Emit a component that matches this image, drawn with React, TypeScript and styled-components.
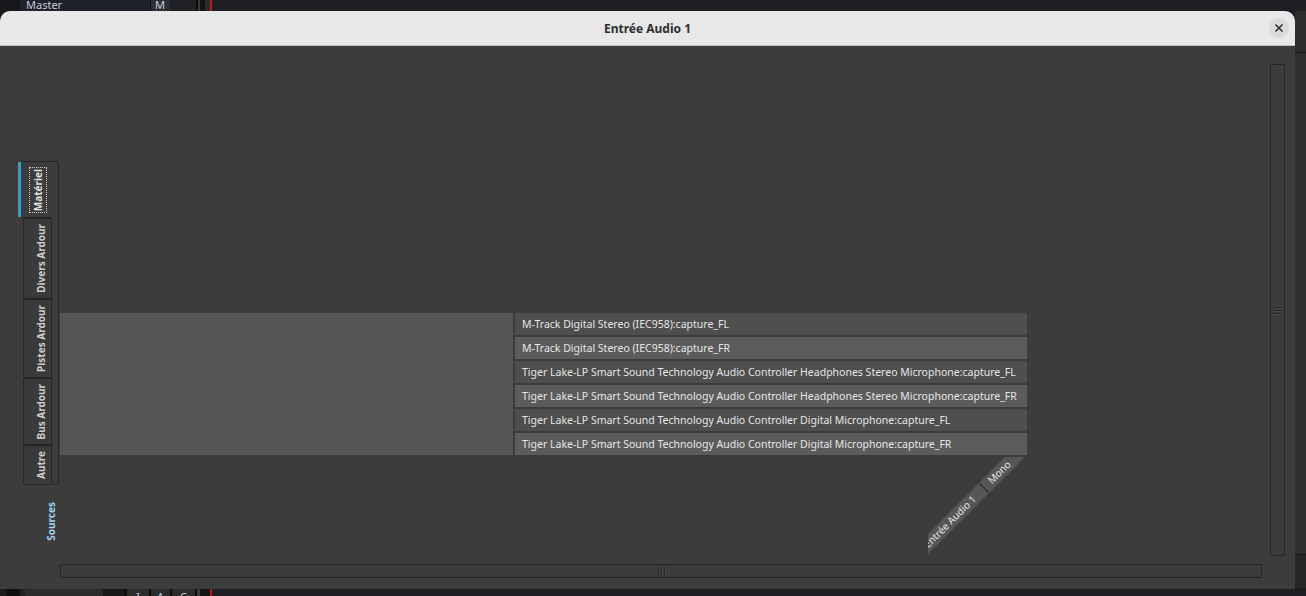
import React from "react";
import styled, { createGlobalStyle, css } from "styled-components";

const GlobalStyle = createGlobalStyle`
  html, body { margin: 0; padding: 0; width: 1306px; height: 596px; overflow: hidden; background: #1c1d22; }
  #root { width: 1306px; height: 596px; }
  * { box-sizing: border-box; }
`;

const Screen = styled.div`
  width: 1306px;
  height: 596px;
  display: flex;
  flex-direction: column;
  font-family: "Noto Sans", "DejaVu Sans", sans-serif;
  background: #1c1d22;
  overflow: hidden;
`;

/* ---------- host application peeking around the dialog ---------- */
const HostBar = styled.div<{ $h: number; $pad: number }>`
  height: ${(p) => p.$h}px;
  flex-shrink: 0;
  display: flex;
  overflow: hidden;
  background: #1e1f24;
  font-size: 11px;
  line-height: ${(p) => p.$h + p.$pad}px;
`;

const HostCell = styled.div<{ $w?: number; $bg: string; $align?: "left" | "center" }>`
  ${(p) => (p.$w ? `width: ${p.$w}px; flex-shrink: 0;` : "flex: 1;")}
  background: ${(p) => p.$bg};
  color: #c3cddd;
  padding-left: ${(p) => (p.$align === "left" ? 6 : 0)}px;
  text-align: ${(p) => p.$align ?? "center"};
  white-space: nowrap;
  overflow: hidden;
`;

const Middle = styled.div`
  display: flex;
  height: 578px;
  flex-shrink: 0;
`;

const HostSide = styled.div`
  flex: 1;
  display: flex;
  flex-direction: column;
  background: #2c2c2c;
`;

const HostSideBlock = styled.div<{ $h?: number; $bg: string }>`
  ${(p) => (p.$h ? `height: ${p.$h}px;` : "flex: 1;")}
  background: ${(p) => p.$bg};
  border-bottom: 1px solid #1a1a1a;
`;

/* ---------- dialog ---------- */
const Dialog = styled.div`
  width: 1295px;
  height: 578px;
  display: flex;
  flex-direction: column;
  border-radius: 10px 10px 0 0;
  overflow: hidden;
  background: #3c3c3c;
`;

const TitleBar = styled.div`
  height: 35px;
  flex-shrink: 0;
  background: #e8e8e8;
  border-bottom: 1px solid #c2c2c2;
  display: grid;
  grid-template-columns: 1fr auto 1fr;
  align-items: center;
`;

const Title = styled.div`
  grid-column: 2;
  font-weight: 700;
  font-size: 12px;
  color: #2e2e2e;
`;

const CloseButton = styled.button`
  grid-column: 3;
  justify-self: end;
  margin-right: 6px;
  width: 20px;
  height: 20px;
  border-radius: 50%;
  border: none;
  padding: 0;
  background: #dadada;
  display: grid;
  place-items: center;
`;

const Body = styled.div`
  flex: 1;
  display: grid;
  grid-template-columns: 42px 1202px 8px 15px;
  grid-template-rows: 492px 8px 14px;
  padding: 18px 0 0 18px;
`;

/* ---------- left notebook ---------- */
const TabsColumn = styled.div`
  grid-column: 1;
  grid-row: 1;
  display: flex;
  flex-direction: column;
  padding-top: 97px;
`;

const Notebook = styled.div`
  display: flex;
`;

const TabList = styled.div`
  width: 33px;
  display: flex;
  flex-direction: column;
  align-items: flex-end;
`;

const Tab = styled.div<{ $active?: boolean }>`
  position: relative;
  width: 28px;
  padding: 5px 4px 5px 0;
  display: flex;
  justify-content: flex-end;
  background: #3a3a3a;
  border: 1px solid #262626;
  border-right: none;
  border-radius: 3px 0 0 3px;
  color: #cdcdcd;
  font-weight: 700;
  font-size: 10px;
  line-height: 12px;
  ${(p) =>
    p.$active &&
    css`
      width: 34px;
      margin-right: -1px;
      z-index: 1;
      padding: 5px 5px 4px 0;
      background: #3c3c3c;
      border-left: 3px solid #3f9bc4;
      color: #e2e2e2;
    `}
`;

const TabLabel = styled.span`
  writing-mode: vertical-rl;
  transform: rotate(180deg);
  white-space: nowrap;
`;

const FocusBox = styled.span`
  display: flex;
  padding: 1px 2px;
  border: 1px dotted #d0d0d0;
`;

const Page = styled.div`
  width: 8px;
  background: #3c3c3c;
  border: 1px solid #262626;
  border-radius: 0 3px 3px 3px;
`;

const SideCaption = styled.span`
  align-self: flex-end;
  margin: 17px 3px 0 0;
  writing-mode: vertical-rl;
  transform: rotate(180deg);
  color: #a3d2ef;
  font-weight: 700;
  font-size: 10px;
  line-height: 12px;
`;

/* ---------- port matrix ---------- */
const Viewport = styled.div`
  grid-column: 2;
  grid-row: 1;
  overflow: hidden;
  display: flex;
  flex-direction: column;
  padding-top: 249px;
`;

const MatrixRow = styled.div`
  display: flex;
  gap: 2px;
`;

const GridArea = styled.div`
  width: 453px;
  background: #555555;
`;

const PortList = styled.div`
  width: 512px;
  display: flex;
  flex-direction: column;
  gap: 2px;
`;

const PortRow = styled.div<{ $alt: boolean }>`
  height: 22px;
  display: flex;
  align-items: center;
  padding: 0 0 1px 7px;
  background: ${(p) => (p.$alt ? "#5c5c5c" : "#4e4e4e")};
  color: #e6e6e6;
  font-size: 10.5px;
  white-space: nowrap;
  overflow: hidden;
`;

const ColumnLabels = styled.svg`
  display: block;
  margin: 2px 0 0 868px;
  flex-shrink: 0;
  font-family: "Noto Sans", "DejaVu Sans", sans-serif;
`;

/* ---------- scrollbars ---------- */
const Trough = styled.div<{ $vertical?: boolean }>`
  grid-column: ${(p) => (p.$vertical ? 4 : 2)};
  grid-row: ${(p) => (p.$vertical ? 1 : 3)};
  background: #3c3c3c;
  border: 1px solid #262626;
  border-radius: 2px;
  display: grid;
  place-items: center;
`;

const Grip = styled.div<{ $vertical?: boolean }>`
  ${(p) =>
    p.$vertical
      ? css`
          width: 8px;
          height: 1px;
          box-shadow: 0 1px 0 #4a4a4a, 0 3px 0 #242424, 0 4px 0 #4a4a4a, 0 6px 0 #242424, 0 7px 0 #4a4a4a;
          transform: translateY(-3px);
        `
      : css`
          width: 1px;
          height: 8px;
          box-shadow: 1px 0 0 #4a4a4a, 3px 0 0 #242424, 4px 0 0 #4a4a4a, 6px 0 0 #242424, 7px 0 0 #4a4a4a;
          transform: translateX(-3px);
        `}
  background: #242424;
`;

const ports = [
  "M-Track Digital Stereo (IEC958):capture_FL",
  "M-Track Digital Stereo (IEC958):capture_FR",
  "Tiger Lake-LP Smart Sound Technology Audio Controller Headphones Stereo Microphone:capture_FL",
  "Tiger Lake-LP Smart Sound Technology Audio Controller Headphones Stereo Microphone:capture_FR",
  "Tiger Lake-LP Smart Sound Technology Audio Controller Digital Microphone:capture_FL",
  "Tiger Lake-LP Smart Sound Technology Audio Controller Digital Microphone:capture_FR",
];

const tabs = ["Divers Ardour", "Pistes Ardour", "Bus Ardour", "Autre"];

export default function App() {
  return (
    <>
      <GlobalStyle />
      <Screen>
        <HostBar $h={11} $pad={-2}>
          <HostCell $w={20} $bg="#17181b" />
          <HostCell $w={130} $bg="#1f2129" $align="left">Master</HostCell>
          <HostCell $w={1} $bg="#0e0e10" />
          <HostCell $w={18} $bg="#2d2f36">M</HostCell>
          <HostCell $w={27} $bg="#1f2126" />
          <HostCell $w={2} $bg="#0c0c0c" />
          <HostCell $w={2} $bg="#3a3a3a" />
          <HostCell $w={5} $bg="#131313" />
          <HostCell $w={5} $bg="#2a2a2a" />
          <HostCell $w={2} $bg="#c01818" />
          <HostCell $bg="#1e1f24" />
        </HostBar>
        <Middle>
          <Dialog>
            <TitleBar>
              <Title>Entrée Audio 1</Title>
              <CloseButton aria-label="Fermer">
                <svg width="10" height="10" viewBox="0 0 10 10">
                  <path d="M1.5 1.5 L8.5 8.5 M8.5 1.5 L1.5 8.5" stroke="#2e2e2e" strokeWidth="1.6" />
                </svg>
              </CloseButton>
            </TitleBar>
            <Body>
              <TabsColumn>
                <Notebook>
                  <TabList>
                    <Tab $active>
                      <FocusBox>
                        <TabLabel>Matériel</TabLabel>
                      </FocusBox>
                    </Tab>
                    {tabs.map((t) => (
                      <Tab key={t}>
                        <TabLabel>{t}</TabLabel>
                      </Tab>
                    ))}
                  </TabList>
                  <Page />
                </Notebook>
                <SideCaption>Sources</SideCaption>
              </TabsColumn>

              <Viewport>
                <MatrixRow>
                  <GridArea />
                  <PortList>
                    {ports.map((p, i) => (
                      <PortRow key={p} $alt={i % 2 === 1}>
                        {p}
                      </PortRow>
                    ))}
                  </PortList>
                </MatrixRow>
                <ColumnLabels width="99" height="99" viewBox="0 0 99 99">
                  <polygon points="77,0 97,0 -2,99 -22,99" fill="#565656" />
                  <line x1="51" y1="26" x2="61" y2="36" stroke="#3a3a3a" strokeWidth="2" />
                  <text
                    x="71"
                    y="15"
                    transform="rotate(-45 71 15)"
                    textAnchor="middle"
                    dominantBaseline="central"
                    fontSize="10"
                    fill="#e8e8e8"
                  >
                    Mono
                  </text>
                  <text
                    x="46"
                    y="40"
                    transform="rotate(-45 46 40)"
                    textAnchor="end"
                    dominantBaseline="central"
                    fontSize="10"
                    fill="#e8e8e8"
                  >
                    Entrée Audio 1
                  </text>
                </ColumnLabels>
              </Viewport>

              <Trough $vertical>
                <Grip $vertical />
              </Trough>
              <Trough>
                <Grip />
              </Trough>
            </Body>
          </Dialog>
          <HostSide>
            <HostSideBlock $h={42} $bg="#2d2d2d" />
            <HostSideBlock $h={502} $bg="#303030" />
            <HostSideBlock $bg="#262626" />
          </HostSide>
        </Middle>
        <HostBar $h={7} $pad={8}>
          <HostCell $w={7} $bg="#1d1d1d" />
          <HostCell $w={13} $bg="#0f0f0f" />
          <HostCell $w={5} $bg="#222222" />
          <HostCell $w={78} $bg="#2b2b2b" />
          <HostCell $w={21} $bg="#181818" />
          <HostCell $w={3} $bg="#0e0e0e" />
          <HostCell $w={22} $bg="#2c2c2c">I</HostCell>
          <HostCell $w={2} $bg="#0e0e0e" />
          <HostCell $w={19} $bg="#2c2c2c">A</HostCell>
          <HostCell $w={2} $bg="#0e0e0e" />
          <HostCell $w={23} $bg="#2c2c2c">C</HostCell>
          <HostCell $w={2} $bg="#0c0c0c" />
          <HostCell $w={3} $bg="#3a3a3a" />
          <HostCell $w={10} $bg="#131313" />
          <HostCell $w={2} $bg="#c01818" />
          <HostCell $bg="#1e1f24" />
        </HostBar>
      </Screen>
    </>
  );
}
